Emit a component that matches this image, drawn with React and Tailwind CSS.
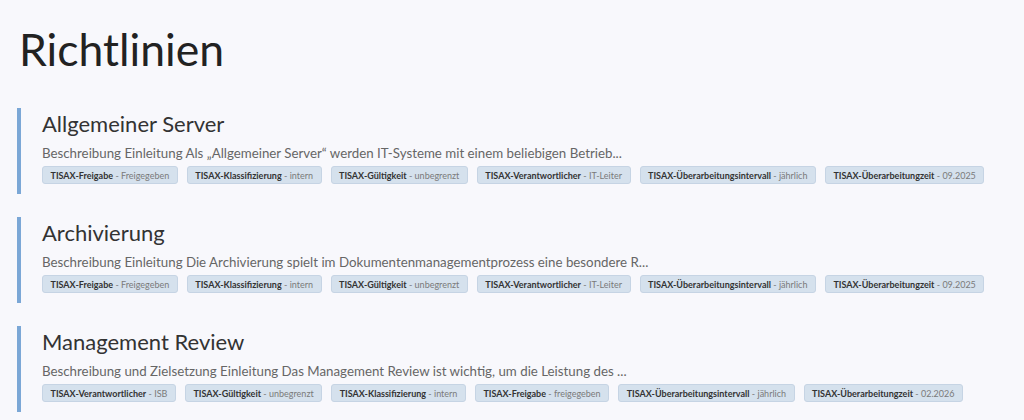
const policies = [
  {
    title: 'Allgemeiner Server',
    text: 'Beschreibung Einleitung Als „Allgemeiner Server“ werden IT-Systeme mit einem beliebigen Betrieb...',
    tags: [
      ['TISAX-Freigabe', 'Freigegeben'],
      ['TISAX-Klassifizierung', 'intern'],
      ['TISAX-Gültigkeit', 'unbegrenzt'],
      ['TISAX-Verantwortlicher', 'IT-Leiter'],
      ['TISAX-Überarbeitungsintervall', 'jährlich'],
      ['TISAX-Überarbeitungzeit', '09.2025'],
    ],
  },
  {
    title: 'Archivierung',
    text: 'Beschreibung Einleitung Die Archivierung spielt im Dokumentenmanagementprozess eine besondere R...',
    tags: [
      ['TISAX-Freigabe', 'Freigegeben'],
      ['TISAX-Klassifizierung', 'intern'],
      ['TISAX-Gültigkeit', 'unbegrenzt'],
      ['TISAX-Verantwortlicher', 'IT-Leiter'],
      ['TISAX-Überarbeitungsintervall', 'jährlich'],
      ['TISAX-Überarbeitungzeit', '09.2025'],
    ],
  },
  {
    title: 'Management Review',
    text: 'Beschreibung und Zielsetzung Einleitung Das Management Review ist wichtig, um die Leistung des ...',
    tags: [
      ['TISAX-Verantwortlicher', 'ISB'],
      ['TISAX-Gültigkeit', 'unbegrenzt'],
      ['TISAX-Klassifizierung', 'intern'],
      ['TISAX-Freigabe', 'freigegeben'],
      ['TISAX-Überarbeitungsintervall', 'jährlich'],
      ['TISAX-Überarbeitungzeit', '02.2026'],
    ],
  },
];

function Tag({ label, value }) {
  return (
    <span className="flex h-[18px] items-center rounded-[3px] border border-[#c6d4e4] bg-[#d5e1ed] px-[7.5px] text-[9px] leading-none whitespace-nowrap">
      <span className="font-bold text-[#333]">{label}</span>
      <span className="text-[#7a7a7a]">&nbsp;- {value}</span>
    </span>
  );
}

function PolicyCard({ policy }) {
  return (
    <div className="border-l-4 border-[#7ba7d6] pl-[21px] pt-[2px] pb-[10px]">
      <h2 className="text-[22px] leading-[28px] text-[#333]">{policy.title}</h2>
      <p className="mt-[5px] text-[13.3px] leading-[20px] text-[#666]">{policy.text}</p>
      <div className="mt-[3px] flex gap-[9px]">
        {policy.tags.map(([label, value]) => (
          <Tag key={label} label={label} value={value} />
        ))}
      </div>
    </div>
  );
}

export default function App() {
  return (
    <div className="min-h-screen bg-[#f8f8fc] pl-[17px] pr-5 font-['Lato',sans-serif]">
      <h1 className="pl-[2px] pt-[19px] text-[44.5px] leading-[60px] text-[#222]">Richtlinien</h1>
      <div className="mt-[29px] flex flex-col gap-[23px]">
        {policies.map((p) => (
          <PolicyCard key={p.title} policy={p} />
        ))}
      </div>
    </div>
  );
}
